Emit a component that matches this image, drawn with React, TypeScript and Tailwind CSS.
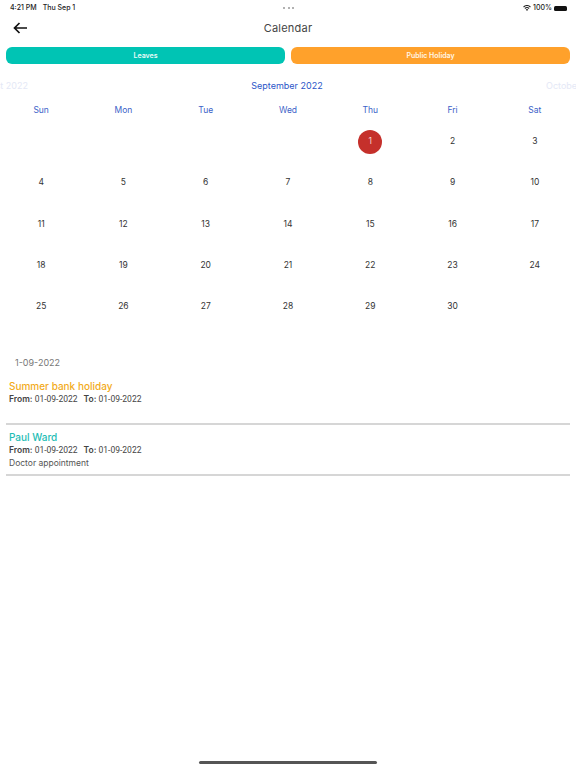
const DAYS = ["Sun", "Mon", "Tue", "Wed", "Thu", "Fri", "Sat"];
const CELLS: (number | null)[] = [
  null, null, null, null,
  ...Array.from({ length: 30 }, (_, i) => i + 1),
];

function Entry({
  title,
  color,
  note,
  className,
}: {
  title: string;
  color: string;
  note?: string;
  className: string;
}) {
  return (
    <div className={`mx-[6px] border-b-2 border-[#d6d6d6] px-[3px] ${className}`}>
      <p className={`text-[10px] leading-[13px] font-medium ${color}`}>{title}</p>
      <p className="font-['Roboto',sans-serif] text-[8.5px] leading-[13px] text-[#444]">
        <span className="font-['Inter',sans-serif] font-semibold">From:</span> 01-09-2022
        <span className="ml-[6px] font-['Inter',sans-serif] font-semibold">To:</span> 01-09-2022
      </p>
      {note && <p className="text-[8.5px] leading-[13px] text-[#555]">{note}</p>}
    </div>
  );
}

export default function App() {
  return (
    <div className="flex h-[768px] w-[576px] flex-col overflow-hidden bg-white font-['Inter',sans-serif]">
      <div className="flex h-[14px] items-center justify-between pl-[10px] pr-[9px] pt-[2px] text-[7px] font-medium text-[#222]">
        <div className="flex flex-1 gap-[6px]">
          <span>4:21 PM</span>
          <span>Thu Sep 1</span>
        </div>
        <div className="flex gap-[2.5px]">
          <span className="h-[2px] w-[2px] rounded-full bg-[#999]" />
          <span className="h-[2px] w-[2px] rounded-full bg-[#999]" />
          <span className="h-[2px] w-[2px] rounded-full bg-[#999]" />
        </div>
        <div className="flex flex-1 items-center justify-end gap-[2px]">
          <svg width="8" height="6" viewBox="0 0 16 12" fill="#222">
            <path d="M8 12 5.6 9.2a3.6 3.6 0 0 1 4.8 0L8 12Z" />
            <path d="M4.4 7.8 3 6.2a7.6 7.6 0 0 1 10 0l-1.4 1.6a5.4 5.4 0 0 0-7.2 0Z" />
            <path d="M1.8 4.8.4 3.2a11.6 11.6 0 0 1 15.2 0l-1.4 1.6a9.4 9.4 0 0 0-12.4 0Z" />
          </svg>
          <span>100%</span>
          <span className="h-[5px] w-[13px] rounded-[1.5px] bg-[#111]" />
        </div>
      </div>

      <div className="relative flex h-[28px] items-center justify-center">
        <svg
          className="absolute left-[13px] top-[8px]"
          width="14"
          height="12"
          viewBox="0 0 14 12"
          fill="none"
          stroke="#111"
          strokeWidth="1.7"
        >
          <path d="M14 6H1.5M6.5 1 1.5 6l5 5" />
        </svg>
        <span className="text-[11px] tracking-[0.02em] text-[#444]">Calendar</span>
      </div>

      <div className="mt-[5px] flex gap-[6px] px-[6px]">
        <div className="flex h-[17px] flex-1 items-center justify-center rounded-[6px] bg-[#00c4b4] pt-[1px] text-[7px] font-semibold text-[#e8fbf8]">
          Leaves
        </div>
        <div className="flex h-[17px] flex-1 items-center justify-center rounded-[6px] bg-[#ffa12b] pt-[1px] text-[7px] font-semibold text-[#fff6e8]">
          Public Holiday
        </div>
      </div>

      <div className="mt-[14px] flex h-[16px] items-center justify-between text-[9px]">
        <div className="flex w-[28px] justify-end overflow-hidden whitespace-nowrap text-[#e4e8f6]">August 2022</div>
        <span className="text-[#2b55c8]">September 2022</span>
        <div className="w-[30px] overflow-hidden whitespace-nowrap text-[#e4e8f6]">October 2022</div>
      </div>

      <div className="mt-[8px] grid grid-cols-7 text-[8.5px] leading-[16px] text-[#3b62c8]">
        {DAYS.map((d) => (
          <div key={d} className="text-center">{d}</div>
        ))}
      </div>

      <div className="mt-[3px] grid grid-cols-7 auto-rows-[41.2px] text-[8.5px] text-[#333]">
        {CELLS.map((n, i) => (
          <div key={i} className="flex items-center justify-center">
            {n === 1 ? (
              <span className="flex h-[24px] w-[24px] items-center justify-center rounded-full bg-[#c5302b] text-[#f5d5d0]">
                1
              </span>
            ) : (
              n
            )}
          </div>
        ))}
      </div>

      <p className="mt-[29.5px] pl-[15px] text-[9px] leading-[14px] text-[#777]">1-09-2022</p>

      <Entry title="Summer bank holiday" color="text-[#f2ab1c]" className="mt-[10px] h-[45px]" />
      <Entry
        title="Paul Ward"
        color="text-[#1fbdb5]"
        note="Doctor appointment"
        className="mt-[6px] pb-[4px]"
      />

      <div className="mb-[4px] mt-auto h-[3px] w-[178px] self-center rounded-full bg-[#555]" />
    </div>
  );
}
